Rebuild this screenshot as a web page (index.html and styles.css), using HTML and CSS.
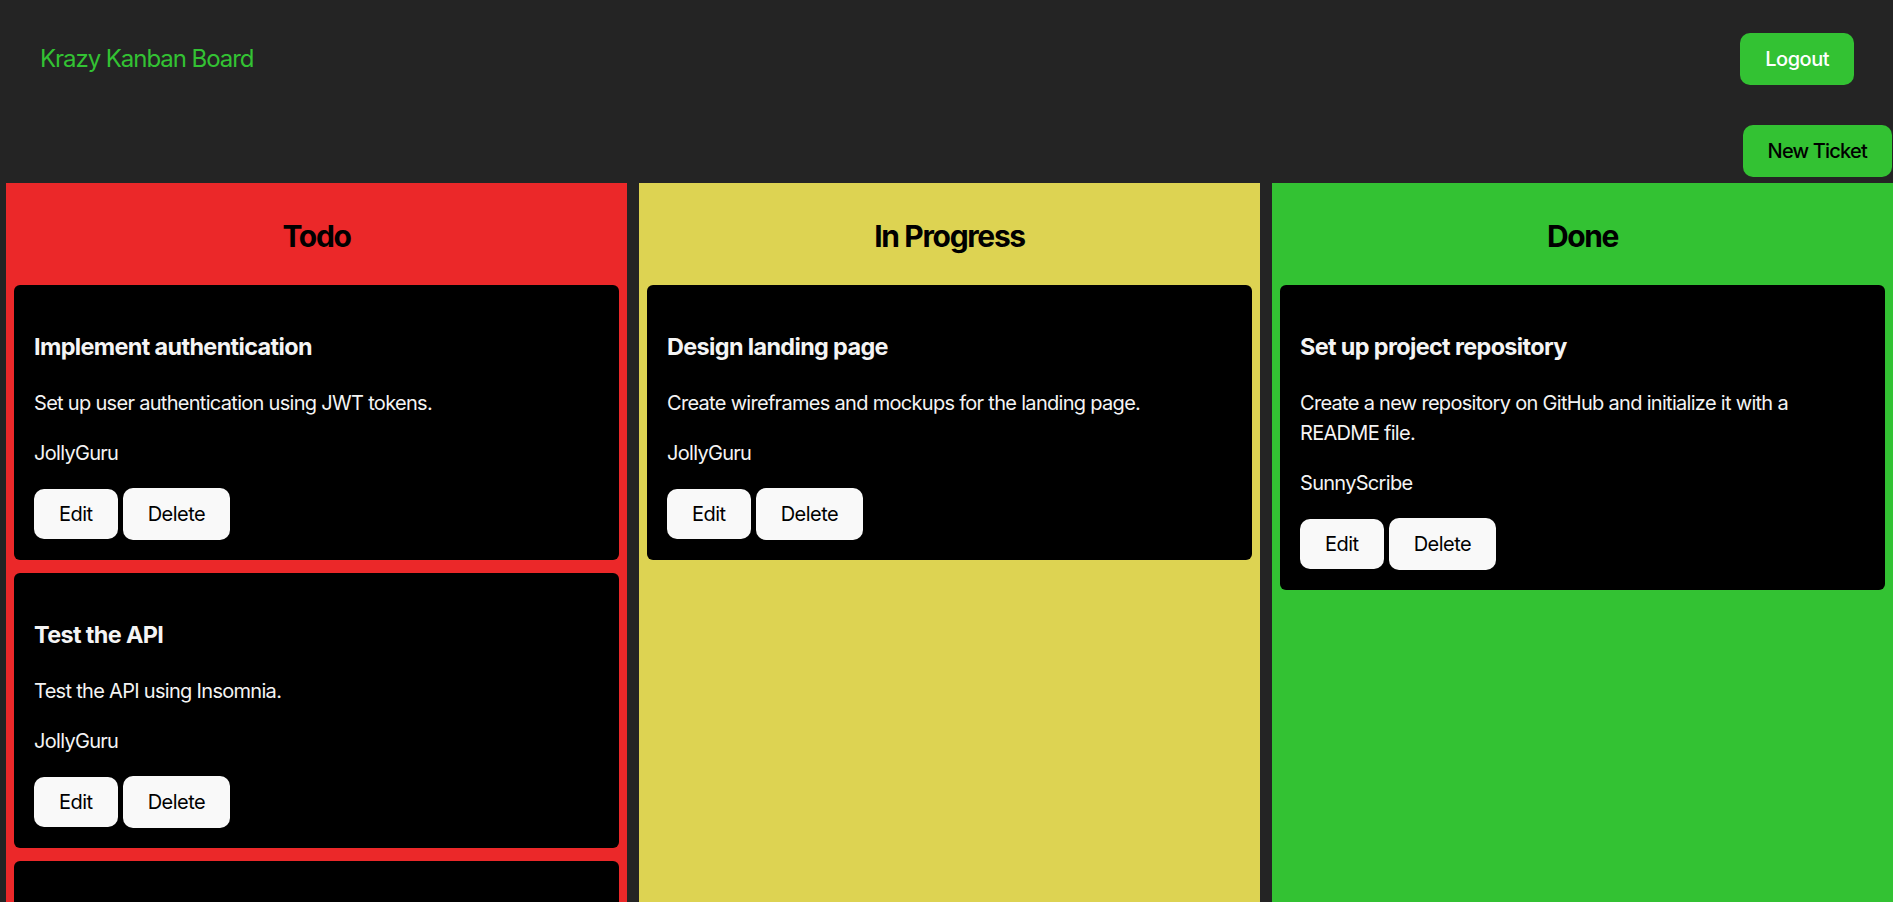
FILE: index.html
```html
<!DOCTYPE html>
<html lang="en">
<head>
<meta charset="utf-8">
<title>Krazy Kanban Board</title>
<link rel="stylesheet" href="styles.css">
</head>
<body>
<div class="app">
  <header class="nav">
    <a class="brand" href="#">Krazy Kanban Board</a>
    <button class="btn btn-green btn-logout">Logout</button>
  </header>
  <div class="toolbar">
    <button class="btn btn-green btn-new">New Ticket</button>
  </div>
  <main class="board">
    <section class="column col-todo">
      <h2 class="column-title">Todo</h2>
      <div class="cards">
        <article class="card">
          <h3>Implement authentication</h3>
          <p>Set up user authentication using JWT tokens.</p>
          <p>JollyGuru</p>
          <div class="actions"><button class="btn btn-light btn-edit">Edit</button><button class="btn btn-light btn-delete">Delete</button></div>
        </article>
        <article class="card">
          <h3>Test the API</h3>
          <p>Test the API using Insomnia.</p>
          <p>JollyGuru</p>
          <div class="actions"><button class="btn btn-light btn-edit">Edit</button><button class="btn btn-light btn-delete">Delete</button></div>
        </article>
        <article class="card">
          <h3>Deploy to Render</h3>
          <p>Deploy the application to Render.</p>
          <p>RadiantComet</p>
          <div class="actions"><button class="btn btn-light btn-edit">Edit</button><button class="btn btn-light btn-delete">Delete</button></div>
        </article>
      </div>
    </section>
    <section class="column col-progress">
      <h2 class="column-title">In Progress</h2>
      <div class="cards">
        <article class="card">
          <h3>Design landing page</h3>
          <p>Create wireframes and mockups for the landing page.</p>
          <p>JollyGuru</p>
          <div class="actions"><button class="btn btn-light btn-edit">Edit</button><button class="btn btn-light btn-delete">Delete</button></div>
        </article>
      </div>
    </section>
    <section class="column col-done">
      <h2 class="column-title">Done</h2>
      <div class="cards">
        <article class="card">
          <h3>Set up project repository</h3>
          <p>Create a new repository on GitHub and initialize it with a README file.</p>
          <p>SunnyScribe</p>
          <div class="actions"><button class="btn btn-light btn-edit">Edit</button><button class="btn btn-light btn-delete">Delete</button></div>
        </article>
      </div>
    </section>
  </main>
</div>
</body>
</html>
```
FILE: styles.css
```css
* { box-sizing: border-box; }

html, body {
  margin: 0;
  padding: 0;
  background: #242424;
}

body {
  font-family: Inter, "Noto Sans", sans-serif;
  font-size: 20px;
  line-height: 1.5;
  letter-spacing: -0.035em;
  color: #f4f4f4;
}

.app {
  height: 100vh;
  display: flex;
  flex-direction: column;
  overflow: hidden;
}

.nav {
  display: flex;
  align-items: center;
  justify-content: space-between;
  padding: 33px 39px 0 40px;
}

.brand {
  color: #33c233;
  text-decoration: none;
  font-size: 24px;
  font-weight: 400;
  letter-spacing: -0.044em;
}

.toolbar {
  display: flex;
  justify-content: flex-end;
  margin-top: 40px;
  padding-right: 1px;
}

.btn {
  font-family: inherit;
  font-size: 20px;
  font-weight: 500;
  line-height: 26px;
  letter-spacing: -0.5px;
  padding: 12px 24px;
  border: 1px solid transparent;
  border-radius: 10px;
  cursor: pointer;
}

.btn-green { background: #33c233; }
.btn-logout { color: #ffffff; }
.btn-new { color: #000000; letter-spacing: -0.8px; }

.btn-light {
  background: #f9f9f9;
  color: #000000;
  font-weight: 400;
}

.btn-edit { line-height: 24px; }
.btn-delete { line-height: 26px; }

.board {
  flex: 1;
  display: grid;
  grid-template-columns: repeat(3, 621px);
  column-gap: 12px;
  padding-left: 6px;
  margin-top: 6px;
  min-height: 0;
}

.column {
  padding: 0 8px;
  color: #000;
}

.col-todo { background: #eb2829; }
.col-progress { background: #ddd352; }
.col-done { background: #33c233; }

.column-title {
  margin: 0;
  padding: 31px 0 26px;
  font-size: 30px;
  line-height: 45px;
  font-weight: 700;
  letter-spacing: -0.045em;
  text-align: center;
}

.cards {
  display: flex;
  flex-direction: column;
  gap: 13px;
}

.card {
  background: #000;
  color: #f4f4f4;
  border-radius: 6px;
  padding: 21px 20px 20px;
}

.card h3 {
  font-size: 23.4px;
  line-height: 1.5;
  font-weight: 700;
  letter-spacing: -0.027em;
  margin: 23.4px 0;
}

.card p {
  margin: 20px 0;
}

.card h3 + p { margin-top: 0; }

.actions {
  display: flex;
  align-items: center;
  gap: 5px;
}
```
